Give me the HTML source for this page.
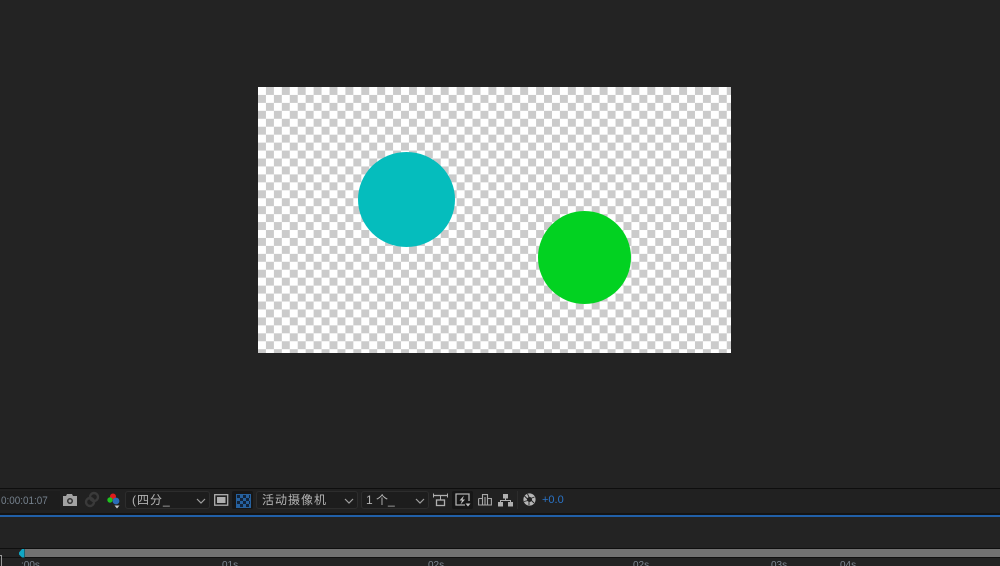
<!DOCTYPE html>
<html lang="zh">
<head>
<meta charset="utf-8">
<style>
html,body{margin:0;padding:0;background:#232323;width:1000px;height:566px;overflow:hidden;}
body{position:relative;font-family:"Liberation Sans","Noto Sans CJK SC",sans-serif;}
#root{position:absolute;left:0;top:0;width:1000px;height:566px;overflow:hidden;background:#232323;}
#inner{position:absolute;left:0;top:0;width:1000px;height:566px;filter:blur(.35px);}
.abs{position:absolute;}
#frame{left:258px;top:87px;width:473px;height:266px;background-color:#fff;
background-image:conic-gradient(#cbcbcb 25%,#fff 0 50%,#cbcbcb 0 75%,#fff 0);background-size:15.9px 15.9px;background-position:0 0;}
.c{border-radius:50%;}
.dd{position:absolute;top:491px;height:18px;background:#1d1d1d;border:1px solid #2d2d2d;border-radius:3px;box-sizing:border-box;color:#b4b4b4;font-size:12px;line-height:16px;white-space:nowrap;}
.t{position:absolute;top:560px;font-size:10px;line-height:12px;color:#7d8792;white-space:nowrap;}
svg{position:absolute;overflow:visible;}
</style>
</head>
<body>
<div id="root">
<div id="inner">
<div id="frame" class="abs"></div>
<div class="abs c" style="left:358px;top:152px;width:97px;height:95px;background:#05bdbd;"></div>
<div class="abs c" style="left:538px;top:211px;width:93px;height:93px;background:#02d221;"></div>

<div class="abs" style="left:0;top:488px;width:1000px;height:1px;background:#0e0e0e;"></div>
<div class="abs" style="left:0;top:489px;width:1000px;height:24px;background:#212121;"></div>
<div class="abs" style="left:0;top:491px;width:60px;height:19px;background:#1d1d1d;"></div>
<div class="abs" style="left:1px;top:494px;font-size:11px;line-height:14px;color:#76828e;transform:scaleX(.9);transform-origin:0 0;white-space:nowrap;">0:00:01:07</div>

<svg style="left:62px;top:493px" width="16" height="14" viewBox="0 0 16 14"><path d="M1 3h3l1-2h5l1 2h4v10H1z" fill="#a3a3a3"/><circle cx="8" cy="8" r="3" fill="#333"/><circle cx="8" cy="8" r="1.500" fill="#a3a3a3"/></svg>
<svg style="left:84px;top:492px" width="16" height="15" viewBox="0 0 16 15"><circle cx="10" cy="5" r="4" fill="none" stroke="#3a3a3a" stroke-width="2.400"/><circle cx="6" cy="10" r="4" fill="none" stroke="#3a3a3a" stroke-width="2.400"/></svg>
<svg style="left:106px;top:492px" width="16" height="18" viewBox="0 0 16 18"><circle cx="7" cy="4.500" r="3" fill="#e01c1c"/><circle cx="4" cy="8" r="2.700" fill="#1ec41e"/><circle cx="10" cy="9" r="3.400" fill="#2a6cb8"/><path d="M8.500 13.500h5l-2.500 3z" fill="#c8c8c8"/></svg>

<div class="dd" style="left:125px;width:85px;padding-left:6px;letter-spacing:1px;">(四分_</div>
<svg style="left:196px;top:498px" width="10" height="6"><path d="M1 1l4 4 4-4" fill="none" stroke="#a0a0a0" stroke-width="1.200"/></svg>

<svg style="left:214px;top:494px" width="15" height="12"><rect x=".7" y=".7" width="13" height="10.500" fill="none" stroke="#b0b0b0" stroke-width="1.300"/><rect x="3" y="3" width="8.500" height="6" fill="#b0b0b0"/></svg>
<div class="abs" style="left:232px;top:491px;width:21px;height:18px;background:#171717;border-radius:2px;"></div>
<div class="abs" style="left:236px;top:494px;width:13px;height:12px;border:1px solid #26619f;background-color:#1d4f86;background-image:conic-gradient(#26619f 25%,#12243a 0 50%,#26619f 0 75%,#12243a 0);background-size:6px 6px;"></div>

<div class="dd" style="left:256px;width:102px;padding-left:5px;letter-spacing:1px;">活动摄像机</div>
<svg style="left:344px;top:498px" width="10" height="6"><path d="M1 1l4 4 4-4" fill="none" stroke="#a0a0a0" stroke-width="1.200"/></svg>

<div class="dd" style="left:361px;width:68px;padding-left:4px;letter-spacing:0;">1 个_</div>
<svg style="left:415px;top:498px" width="10" height="6"><path d="M1 1l4 4 4-4" fill="none" stroke="#a0a0a0" stroke-width="1.200"/></svg>

<svg style="left:433px;top:493px" width="15" height="14"><path d="M0 2.500h15" stroke="#b0b0b0" stroke-width="1.300"/><path d="M.5 .5v4M14.500 .5v4" stroke="#b0b0b0"/><path d="M7.500 3v4" stroke="#b0b0b0"/><rect x="3.500" y="7" width="8" height="5.500" fill="none" stroke="#b0b0b0" stroke-width="1.300"/></svg>
<div class="abs" style="left:452px;top:491px;width:21px;height:18px;background:#171717;border-radius:2px;"></div>
<svg style="left:455px;top:493px" width="16" height="15"><path d="M10 12H1V1h13v7" fill="none" stroke="#b0b0b0" stroke-width="1.300"/><path d="M9 2.500L4.500 7.500h2.500L5.500 11.500 10 6.500H7.500z" fill="#c0c0c0"/><path d="M10.500 10.500h5l-2.500 3z" fill="#c0c0c0"/></svg>
<svg style="left:478px;top:494px" width="14" height="12"><path d="M.6 4.500v6.500h12.800V4.500H9.500M4.500 4.500H.6M4.500 11V4.500M9.500 11V4.500" fill="none" stroke="#a8a8a8" stroke-width="1.100"/><path d="M4.500 4.500V.6h5v3.900M7 3v8" fill="none" stroke="#a8a8a8" stroke-width="1.100"/></svg>
<svg style="left:498px;top:494px" width="15" height="13"><rect x="5" y="0" width="5" height="4.500" fill="#b0b0b0"/><rect x="0" y="8" width="5" height="4.500" fill="#b0b0b0"/><rect x="10" y="8" width="5" height="4.500" fill="#b0b0b0"/><path d="M2.500 8V6.500h10V8M7.500 4.500v2" fill="none" stroke="#b0b0b0"/></svg>
<div class="abs" style="left:517px;top:491px;width:1px;height:18px;background:#2c2c2c;"></div>
<svg style="left:523px;top:493px" width="13" height="13" viewBox="0 0 13 13"><circle cx="6.500" cy="6.500" r="4.300" fill="none" stroke="#b5b5b5" stroke-width="3.600"/><path d="M4.500 1L6.500 5M11.500 4L7.500 5.500M11 10L8 7M6 12L6 8M1 8.500L5 7.500M1.500 3L4.500 6" stroke="#232323" stroke-width=".9"/></svg>
<div class="abs" style="left:542px;top:493px;font-size:11px;line-height:14px;color:#2a74c8;">+0.0</div>

<div class="abs" style="left:0;top:513px;width:1000px;height:2px;background:#141414;"></div>
<div class="abs" style="left:0;top:515px;width:1000px;height:2px;background:#2160a8;"></div>

<div class="abs" style="left:0;top:548px;width:1000px;height:1px;background:#0f0f0f;"></div>
<div class="abs" style="left:25px;top:549px;width:975px;height:8px;background:#727272;"></div>
<div class="abs" style="left:0;top:557px;width:1000px;height:1px;background:#111;"></div>
<svg style="left:19px;top:549px" width="6" height="9"><path d="M5.500 0v8.500H3L0 5.500V3.500L3 0z" fill="#10a6c4"/></svg>
<div class="abs" style="left:0;top:555px;width:2px;height:11px;border-top:1px solid #9a9a9a;border-right:1px solid #9a9a9a;box-sizing:border-box;"></div>

<div class="t" style="left:21px;">:00s</div>
<div class="t" style="left:222px;">01s</div>
<div class="t" style="left:428px;">02s</div>
<div class="t" style="left:633px;">02s</div>
<div class="t" style="left:771px;">03s</div>
<div class="t" style="left:840px;">04s</div>
</div>
</div>
</body>
</html>
